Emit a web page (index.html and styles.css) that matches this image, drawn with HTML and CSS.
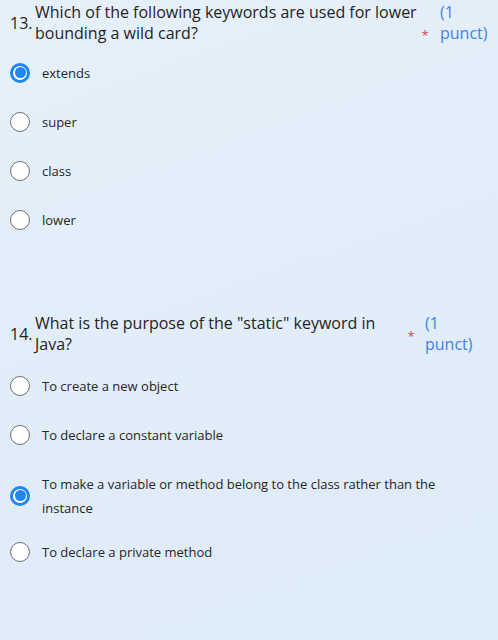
FILE: index.html
```html
<!DOCTYPE html>
<html lang="en">
<head>
<meta charset="utf-8">
<title>Quiz</title>
<link rel="stylesheet" href="styles.css">
</head>
<body>
<div class="page">
  <section class="question q13">
    <div class="q-head">
      <div class="q-num">13.</div>
      <div class="q-text">Which of the following keywords are used for lower bounding a wild card?</div>
      <div class="q-star">*</div>
      <div class="q-pts">(1<br>punct)</div>
    </div>
    <div class="options">
      <div class="opt"><span class="radio checked"><span class="dot"></span></span><span class="label">extends</span></div>
      <div class="opt"><span class="radio"></span><span class="label">super</span></div>
      <div class="opt"><span class="radio"></span><span class="label">class</span></div>
      <div class="opt"><span class="radio"></span><span class="label">lower</span></div>
    </div>
  </section>
  <section class="question q14">
    <div class="q-head">
      <div class="q-num">14.</div>
      <div class="q-text">What is the purpose of the "static" keyword in Java?</div>
      <div class="q-star">*</div>
      <div class="q-pts">(1<br>punct)</div>
    </div>
    <div class="options">
      <div class="opt"><span class="radio"></span><span class="label">To create a new object</span></div>
      <div class="opt"><span class="radio"></span><span class="label">To declare a constant variable</span></div>
      <div class="opt opt-multi"><span class="radio checked"><span class="dot"></span></span><span class="label">To make a variable or method belong to the class rather than the instance</span></div>
      <div class="opt"><span class="radio"></span><span class="label">To declare a private method</span></div>
    </div>
  </section>
</div>
</body>
</html>
```
FILE: styles.css
```css
html, body {
  margin: 0;
  padding: 0;
}
body {
  width: 498px;
  height: 640px;
  overflow: hidden;
  background: linear-gradient(160deg, #e6f0fa 0%, #e1edf9 45%, #deebf8 100%);
  font-family: "Open Sans", "Noto Sans", sans-serif;
  color: #242424;
}
.page {
  padding: 2px 0 0 10px;
}
.q-head {
  display: flex;
  align-items: flex-start;
}
.q-num {
  width: 25px;
  align-self: center;
  font-size: 16px;
  line-height: 21px;
}
.q-text {
  font-size: 16px;
  line-height: 21px;
}
.q13 .q-text { width: 387px; }
.q14 .q-text { width: 350px; }
.q-star {
  width: 12px;
  color: #d0484a;
  font-size: 13px;
  text-align: center;
}
.q13 .q-star { margin-left: -3px; padding-top: 24px; }
.q14 .q-star { margin-left: 20px; padding-top: 14px; }
.q-pts {
  color: #3f84e4;
  font-size: 16px;
  line-height: 21px;
}
.q13 .q-pts { margin-left: 9px; }
.q14 .q-pts { margin-left: 8px; }
.options {
  display: flex;
  flex-direction: column;
  margin-top: 4px;
}
.q14 .options { margin-top: 6px; }
.q14 { margin-top: 69px; }
.opt {
  display: flex;
  align-items: center;
  gap: 12px;
  padding: 12.5px 0;
  font-size: 13px;
  line-height: 24px;
}
.opt-multi {
  padding-bottom: 8px;
}
.radio {
  flex: none;
  width: 20px;
  height: 20px;
  box-sizing: border-box;
  border: 1.5px solid #6f6f6f;
  border-radius: 50%;
  background: #fff;
  display: flex;
  align-items: center;
  justify-content: center;
}
.radio.checked {
  border: 3px solid #1f86f2;
  background: #fff;
}
.radio .dot {
  width: 11px;
  height: 11px;
  border-radius: 50%;
  background: #1f86f2;
}
.label {
  max-width: 405px;
  color: #262626;
}
```
